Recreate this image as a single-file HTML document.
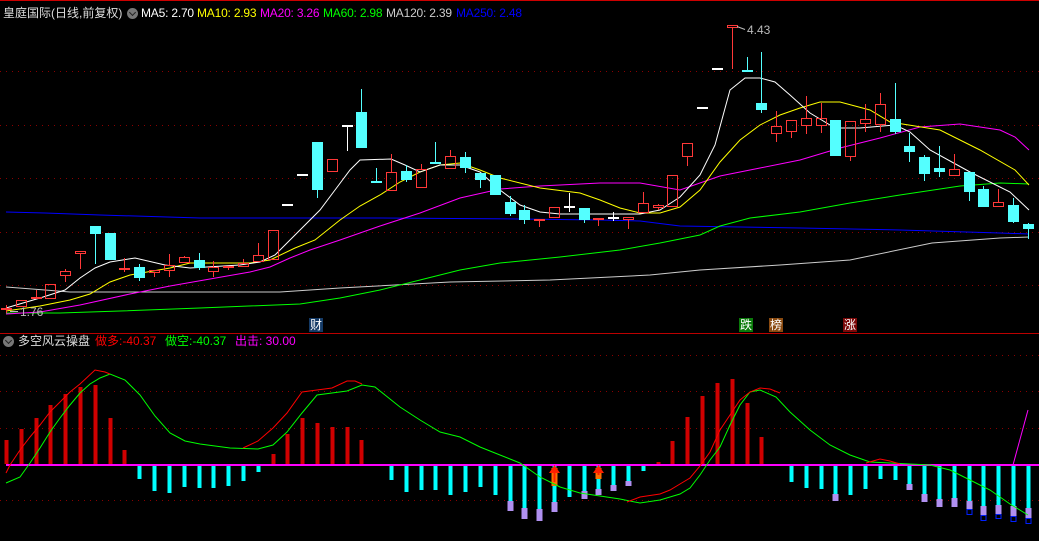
<!DOCTYPE html>
<html><head><meta charset="utf-8"><style>
html,body{margin:0;padding:0;background:#000;width:1039px;height:541px;overflow:hidden}
svg{position:absolute;left:0;top:0}
.t{position:absolute;font-family:"Liberation Sans","Noto Sans CJK SC",sans-serif;font-size:12px;white-space:nowrap;line-height:14px}
.ic{position:absolute;width:11px;height:11px;border-radius:50%;background:#777}
.ic:after{content:"";position:absolute;left:3px;top:2px;width:4px;height:4px;border-right:1.5px solid #222;border-bottom:1.5px solid #222;transform:rotate(45deg)}
.lb{position:absolute;width:14px;height:14px;font-family:"Noto Sans CJK SC",sans-serif;font-size:12px;line-height:14px;text-align:center;color:#fff}
</style></head><body>
<svg id="s" width="1039" height="541" xmlns="http://www.w3.org/2000/svg"></svg>
<div class="t" style="left:3px;top:6px;color:#ddd">皇庭国际(日线,前复权)</div>
<div class="ic" style="left:127px;top:8px"></div>
<div class="t" style="left:141px;top:6px;color:#fff;letter-spacing:-0.2px">MA5: 2.70</div>
<div class="t" style="left:197px;top:6px;color:#ff0;letter-spacing:-0.2px">MA10: 2.93</div>
<div class="t" style="left:260px;top:6px;color:#f0f;letter-spacing:-0.2px">MA20: 3.26</div>
<div class="t" style="left:323px;top:6px;color:#0f0;letter-spacing:-0.2px">MA60: 2.98</div>
<div class="t" style="left:386px;top:6px;color:#ccc;letter-spacing:-0.2px">MA120: 2.39</div>
<div class="t" style="left:456px;top:6px;color:#00f;letter-spacing:-0.2px">MA250: 2.48</div>
<div class="t" style="left:747px;top:23px;color:#bbb">4.43</div>
<div class="t" style="left:20px;top:305px;color:#bbb">1.76</div>
<div class="lb" style="left:309px;top:318px;background:#143a66">财</div>
<div class="lb" style="left:739px;top:318px;background:#0a7a0a">跌</div>
<div class="lb" style="left:769px;top:318px;background:#8a4a10">榜</div>
<div class="lb" style="left:843px;top:318px;background:#7a0808">涨</div>
<div class="ic" style="left:3px;top:336px"></div>
<div class="t" style="left:18px;top:334px;color:#ddd">多空风云操盘</div>
<div class="t" style="left:95px;top:334px;color:#f00">做多:-40.37</div>
<div class="t" style="left:165px;top:334px;color:#0f0">做空:-40.37</div>
<div class="t" style="left:235px;top:334px;color:#f0f">出击: 30.00</div>
<script>
var s=document.getElementById('s'),h='';
function X(i){return 6+i*14.81}
function L(x1,y1,x2,y2,c,w,extra){h+='<line x1="'+x1+'" y1="'+y1+'" x2="'+x2+'" y2="'+y2+'" stroke="'+c+'" stroke-width="'+(w||1)+'" '+(extra||'')+'/>'}
function R(x,y,w,hh,f,st){h+='<rect x="'+x+'" y="'+y+'" width="'+w+'" height="'+hh+'" fill="'+(f||'none')+'"'+(st?' stroke="'+st+'" stroke-width="1"':'')+'/>'}
function P(pts,c){h+='<polyline points="'+pts.map(function(p){return p.join(',')}).join(' ')+'" fill="none" stroke="'+c+'" stroke-width="1"/>'}
L(0,0.5,1039,0.5,'#c00');L(0,333.5,1039,333.5,'#b00');
var dash='stroke-dasharray="1,5"';
[71,125,178,232,285].forEach(function(y){L(0,y+.5,1039,y+.5,'#8a0000',1,dash)});
[355,391,428,500].forEach(function(y){L(0,y+.5,1039,y+.5,'#8a0000',1,dash)});
P([[6,212],[45,213],[100,215],[200,218],[380,218],[520,219],[600,220],[640,221],[680,226],[800,228],[900,230],[1000,233],[1029,234]],'#00f');
P([[6,287],[45,290],[70,292],[280,292],[340,288],[450,282],[550,280],[650,275],[700,270],[780,265],[850,260],[932,243],[1000,238],[1029,237]],'#ccc');
P([[6,313],[60,313],[120,311],[200,308],[300,304],[340,298],[380,290],[420,280],[460,270],[500,263],[560,257],[620,250],[660,243],[700,235],[720,226],[750,218],[800,212],[850,203],[900,195],[960,186],[1000,183],[1029,184]],'#0f0');
P([[6,314],[40,312],[80,305],[130,294],[170,286],[210,279],[250,272],[270,267],[290,258],[310,250],[340,240],[380,226],[420,213],[460,198],[500,189],[540,186],[600,183],[640,183],[680,190],[720,176],[760,168],[800,160],[840,148],[880,138],[920,127],[960,124],[1000,130],[1015,137],[1029,150]],'#f0f');
P([[6,311],[40,306],[70,300],[90,294],[110,282],[130,275],[170,268],[190,263],[250,263],[270,260],[295,248],[315,240],[340,220],[360,206],[380,195],[400,182],[420,172],[440,165],[460,163],[480,170],[500,178],[540,188],[580,193],[600,200],[620,208],[640,213],[660,213],[680,207],[700,190],[720,162],[740,140],[760,125],[780,115],[800,108],[820,102],[840,102],[870,110],[890,122],[940,130],[980,150],[1015,170],[1029,185]],'#ff0');
P([[6,308],[40,298],[65,290],[80,278],[95,268],[110,262],[135,258],[165,265],[190,268],[240,265],[260,262],[275,255],[290,240],[305,225],[320,210],[335,190],[350,170],[360,160],[391,159],[405,165],[420,172],[440,165],[460,165],[480,172],[500,190],[520,205],[540,212],[560,214],[640,214],[660,210],[680,197],[700,175],[715,145],[730,90],[745,78],[760,78],[775,82],[790,95],[810,113],[835,128],[860,128],[895,125],[910,132],[930,150],[970,172],[1010,192],[1029,210]],'#fff');
var C=[[0,308,310,305,313,'r'],[1,300,307,300,307,'r'],[2,297,298,290,298,'r'],[3,284,299,284,299,'r'],[4,271,276,269,282,'r'],[5,251,254,251,269,'r'],[6,226,234,226,264,'c'],[7,233,260,233,260,'c'],[8,268,269,258,272,'r'],[9,267,278,264,281,'c'],[10,270,273,270,277,'r'],[11,265,271,254,277,'r'],[12,257,263,256,263,'r'],[13,260,268,253,270,'c'],[14,267,272,261,277,'r'],[15,266,268,266,270,'r'],[16,263,267,259,267,'r'],[17,255,262,243,262,'r'],[18,230,260,230,260,'r'],[19,204,205,204,205,'w'],[20,174,175,174,175,'w'],[21,142,190,142,198,'c'],[22,159,172,159,172,'r'],[23,125,126,125,151,'w'],[24,112,148,89,148,'c'],[25,181,183,168,183,'c'],[26,172,191,154,191,'r'],[27,171,180,165,182,'c'],[28,169,188,164,188,'r'],[29,162,164,142,164,'c'],[30,156,169,150,169,'r'],[31,157,168,152,173,'c'],[32,173,180,173,188,'c'],[33,175,195,175,195,'c'],[34,202,214,196,216,'c'],[35,210,220,205,224,'c'],[36,219,221,219,227,'r'],[37,207,218,207,218,'r'],[38,206,207,193,212,'w'],[39,208,220,208,223,'c'],[40,218,220,218,226,'r'],[41,217,218,212,221,'w'],[42,217,220,217,229,'r'],[43,203,213,192,213,'r'],[44,205,208,204,210,'r'],[45,175,207,175,207,'r'],[46,143,157,143,166,'r'],[47,107,108,107,108,'w'],[48,68,69,68,69,'w'],[49,25,28,25,69,'r'],[50,70,72,57,72,'c'],[51,103,110,52,113,'c'],[52,126,134,111,142,'r'],[53,120,132,120,138,'r'],[54,118,126,96,134,'r'],[55,118,126,103,133,'r'],[56,120,156,120,156,'c'],[57,121,157,121,161,'r'],[58,119,124,104,132,'r'],[59,104,125,93,132,'r'],[60,119,132,83,134,'c'],[61,146,152,133,162,'c'],[62,157,174,155,181,'c'],[63,168,172,146,177,'c'],[64,169,176,154,176,'r'],[65,172,192,172,201,'c'],[66,189,207,186,207,'c'],[67,202,207,189,207,'r'],[68,205,222,198,223,'c'],[69,224,229,223,239,'c']];
C.forEach(function(c){var x=Math.round(X(c[0]))+.5,col=c[5]=='r'?'#ff3838':c[5]=='c'?'#54ffff':'#fff';
 if(c[3]<c[1])L(x,c[3],x,c[1],col);if(c[4]>c[2])L(x,c[2],x,c[4],col);
 var hh=c[2]-c[1];
 if(hh<=2){R(x-5.5,c[1],11,2,col)}
 else if(c[5]=='r'){R(x-5,c[1]+.5,10,hh-1,'none',col)}
 else R(x-5.5,c[1],11,hh,col);
});
L(737,26.5,745,29.5,'#bbb');L(10,311.5,18,311.5,'#bbb');
L(6,465,1039,465,'#f0f',2);
var B=[440,429,418,405,394,387,385,418,450,479,491,493,487,488,488,486,481,472,454,434,418,423,427,427,440,465,480,492,490,490,495,492,487,495,501,508,509,502,497,491,489,485,481,471,462,441,417,396,383,379,403,437,466,482,488,489,494,495,489,479,480,484,494,499,498,501,506,505,506,508];
var PU={34:[501,511],35:[508,519],36:[509,521],37:[502,512],39:[491,499],40:[489,495],41:[485,491],42:[481,486],56:[494,501],61:[484,490],62:[494,502],63:[499,507],64:[498,507],65:[501,509],66:[506,515],67:[505,514],68:[506,516],69:[508,518]};
var BL={65:[509,514],66:[515,520],67:[514,518],68:[516,521],69:[518,523]};
B.forEach(function(y,i){var x=Math.round(X(i));
 if(y<464)R(x-1.5,y,4,464-y,'#d00000');else if(y>466)R(x-1.5,466,4,y-466,'#00ffff');
 if(PU[i])R(x-2.5,PU[i][0],6,PU[i][1]-PU[i][0],'#b090f0');
 if(BL[i])R(x-2,BL[i][0]+.5,5,BL[i][1]-BL[i][0],'none','#0020ff');
});
[37,40].forEach(function(i){var x=Math.round(X(i));var b=i==37?486:479;
 R(x-2.5,468,6,b-468,'#ff7000');
 h+='<polygon points="'+(x+.5)+',465 '+(x-5)+',473 '+(x+6)+',473" fill="#ff2000"/>';
 R(x-.5,470,2,b-474,'#ff2000');
});
P([[6,483],[20,477],[30,463],[40,448],[50,432],[60,418],[70,405],[80,393],[90,384],[100,378],[110,374],[125,380],[140,395],[155,416],[170,433],[185,441],[200,444],[230,448],[258,449],[273,445],[287,432],[302,413],[317,395],[347,391],[362,385],[375,387],[385,395],[400,407],[420,420],[440,432],[460,437],[480,447],[500,455],[520,463],[540,477],[560,487],[580,493],[600,496],[620,499],[640,503],[660,500],[680,494],[690,488],[700,475],[710,460],[720,447],[730,425],[740,405],[750,392],[760,390],[776,397],[790,412],[810,430],[830,445],[850,455],[870,462],[890,463],[930,465],[950,470],[970,480],[990,490],[1010,504],[1028,515]],'#00ff00');
P([[6,473],[10,465],[20,450],[30,437],[40,425],[50,412],[60,402],[70,392],[80,384],[95,370],[105,372],[110,374]],'#ff0000');
P([[243,448],[258,441],[273,428],[287,413],[302,392],[317,390],[332,388],[347,381],[355,381],[362,384]],'#ff0000');
P([[627,502],[640,497],[660,494],[670,490],[680,484],[690,478],[700,466],[710,452],[720,430],[730,415],[740,400],[750,392],[760,388],[770,389],[780,393]],'#ff0000');
P([[866,463],[880,459],[890,461],[900,464]],'#ff0000');
P([[1013,465],[1028,410]],'#ff00ff');
s.innerHTML=h;
</script>
</body></html>
